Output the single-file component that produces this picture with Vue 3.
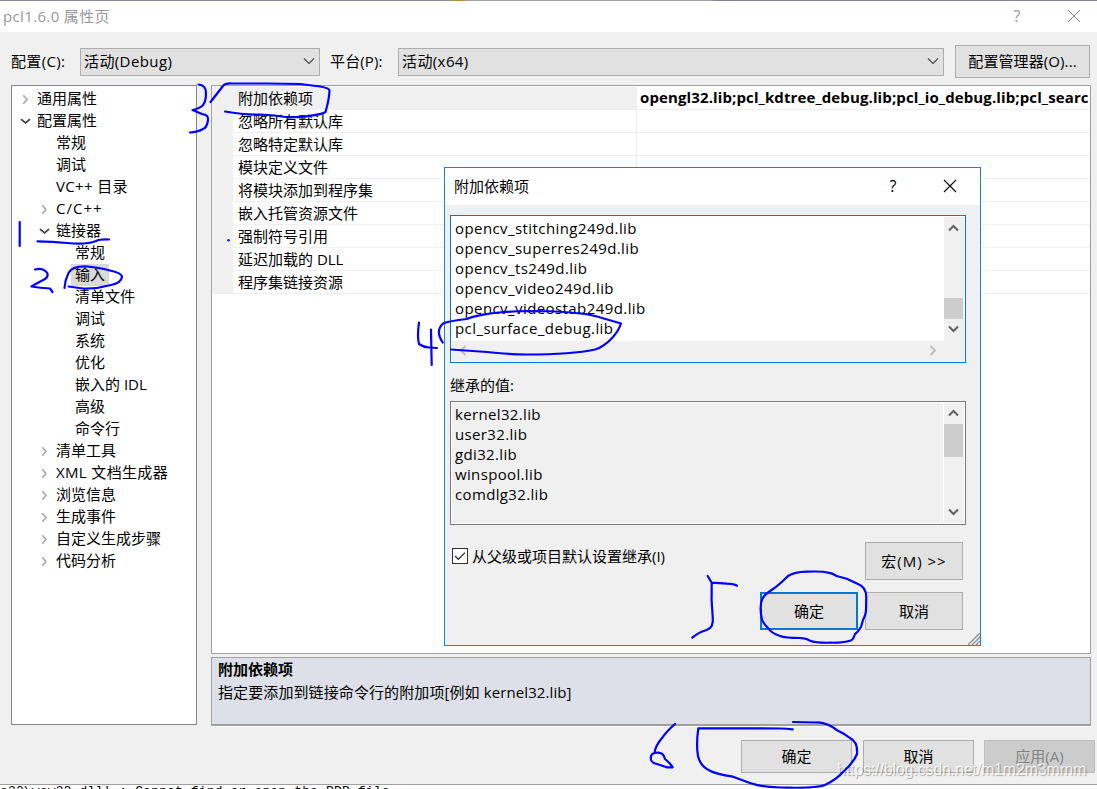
<script setup>
import { ref } from "vue";

const tree = ref([
  { text: "通用属性", level: 0, arrow: "closed" },
  { text: "配置属性", level: 0, arrow: "open" },
  { text: "常规", level: 1 },
  { text: "调试", level: 1 },
  { text: "VC++ 目录", level: 1, spacing: "wide" },
  { text: "C/C++", level: 1, arrow: "closed", spacing: "wider" },
  { text: "链接器", level: 1, arrow: "open" },
  { text: "常规", level: 2 },
  { text: "输入", level: 2, selected: true },
  { text: "清单文件", level: 2 },
  { text: "调试", level: 2 },
  { text: "系统", level: 2 },
  { text: "优化", level: 2 },
  { text: "嵌入的 IDL", level: 2 },
  { text: "高级", level: 2 },
  { text: "命令行", level: 2 },
  { text: "清单工具", level: 1, arrow: "closed" },
  { text: "XML 文档生成器", level: 1, arrow: "closed", spacing: "wide" },
  { text: "浏览信息", level: 1, arrow: "closed" },
  { text: "生成事件", level: 1, arrow: "closed" },
  { text: "自定义生成步骤", level: 1, arrow: "closed" },
  { text: "代码分析", level: 1, arrow: "closed" },
]);

const rows = ref([
  {
    name: "附加依赖项",
    value: "opengl32.lib;pcl_kdtree_debug.lib;pcl_io_debug.lib;pcl_searc",
  },
  { name: "忽略所有默认库" },
  { name: "忽略特定默认库" },
  { name: "模块定义文件" },
  { name: "将模块添加到程序集" },
  { name: "嵌入托管资源文件" },
  { name: "强制符号引用" },
  { name: "延迟加载的 DLL" },
  { name: "程序集链接资源" },
]);

const libs = ref([
  "opencv_stitching249d.lib",
  "opencv_superres249d.lib",
  "opencv_ts249d.lib",
  "opencv_video249d.lib",
  "opencv_videostab249d.lib",
  "pcl_surface_debug.lib",
]);
const inherited = ref([
  "kernel32.lib",
  "user32.lib",
  "gdi32.lib",
  "winspool.lib",
  "comdlg32.lib",
]);

// pen strokes, in page coordinates
const strokes = [
  "M19.7 222V246",
  "M37.5 241.3Q52 241.5 67 243Q86 245 96 241Q100 239 109 239.5",
  "M35 269.5C44 267 52 274 45 279C40 282 35 284 31.5 286.5Q40 288 50 288.5L52.5 292",
  "M64.5 288Q65 280 68.5 273Q72 266 87 266.5Q101 268 110 270.5Q122 273 122 277Q121 283 111 285Q97 289 83 288.5L68.5 286.5",
  "M198.5 84.5Q206 85 206 93C206 104 203 108 192.5 110L202 114Q209 115 208 120Q207 128 203 129Q198 132 190 132.5",
  "M210.5 102L223 86Q225 83 232 83.5L267 83.5L300 84L320 86.5Q330 88 329.5 91Q329 100 325.5 112Q319 116 289 117.5Q274 115 260 114.5Q244 115 225 111.5",
  "M419 322.5Q417 337 419 344Q423 347 429 347.5L437 348",
  "M431 329.5L431.7 365",
  "M442.7 342.5Q435 331 443 323.5Q449 321 466.7 319Q485 312 527 311Q577 311 597 316.5L621 323.5Q619 330 613 337Q604 347 595 349.5Q572 354.5 527 354.5Q502 354 487 352L451 349.5",
  "M707.7 576L711.7 582.7L727 583.7Q734 584 737 585.7M711.7 582.7Q711 600 712.7 616.7Q714 628 706.7 630Q699 632 692.3 637.7",
  "M762.7 598.3Q765 594 773 589Q779 585 788 576Q794 572 806.7 571.7Q823 571 828 572.7Q832 573 836.7 576L846.7 578.7L858 584Q866 587 866.3 596.7L866 610Q866 614 863 620L861 627Q858 632 855 634Q853 641 849 641Q842 643 830 642.7Q816 643 810 640.7Q806 638 800 638Q785 638 780 636Q771 633 768 628Q762 622 761.7 618Q759 605 762.7 598.3",
  "M675 724Q667 731 663 736.7Q655 746 654.5 753Q650 754 651 760Q652 763 657 764L666.7 767.3L672.7 767.3Q670 763 665 759Q664 755 661.7 753.5Q658 752 654.5 753",
  "M792.7 729.3Q786 728.5 780 728.5L698.3 728.3Q696 745 698 756Q700 766 710 770.7Q716 774 733 776.7L750 783Q764 788 790 787.7Q817 788 825 785Q837 779 843 772Q854 762 857 754Q858 742 850 738Q845 734 836.7 730Q826 722 816 722.5L793 722",
];
</script>

<template>
  <div class="screen">
    <div class="behind-top"></div>
    <header class="titlebar">
      <span class="wide">pcl1.6.0 属性页</span>
      <div class="title-icons">
        <span class="help">?</span>
        <svg width="14" height="14" viewBox="0 0 14 14">
          <path d="M1 1L13 13M13 1L1 13" stroke="#858585" fill="none" />
        </svg>
      </div>
    </header>

    <div class="config">
      <label class="config-label">配置(C):</label>
      <div class="combo combo-config">
        <span>活动(Debug)</span>
        <svg width="12" height="8" viewBox="0 0 12 8">
          <path d="M1 1.5L6 6.5L11 1.5" stroke="#444" stroke-width="1.1" fill="none" />
        </svg>
      </div>
      <label class="platform-label">平台(P):</label>
      <div class="combo combo-platform">
        <span>活动(x64)</span>
        <svg width="12" height="8" viewBox="0 0 12 8">
          <path d="M1 1.5L6 6.5L11 1.5" stroke="#444" stroke-width="1.1" fill="none" />
        </svg>
      </div>
      <button class="manager">配置管理器(O)...</button>
    </div>

    <main class="panes">
      <div class="tree">
        <div
          v-for="(node, i) in tree"
          :key="i"
          class="node"
          :class="'level' + node.level"
        >
          <span class="arrow">
            <svg v-if="node.arrow === 'closed'" width="7" height="11" viewBox="0 0 7 11">
              <path d="M1.3 1.3L5 5.5L1.3 9.7" stroke="#a6a6a6" stroke-width="1.6" fill="none" />
            </svg>
            <svg v-if="node.arrow === 'open'" width="11" height="7" viewBox="0 0 11 7">
              <path d="M1 1.2L5.5 5L10 1.2" stroke="#404040" stroke-width="1.7" fill="none" />
            </svg>
          </span>
          <span class="node-text" :class="[node.spacing, { selected: node.selected }]">{{ node.text }}</span>
        </div>
      </div>

      <div class="right">
        <div class="grid">
          <div v-for="row in rows" :key="row.name" class="row">
            <div class="gutter"></div>
            <div class="name">{{ row.name }}</div>
            <div class="value">{{ row.value }}</div>
          </div>
        </div>
        <div class="description">
          <strong>附加依赖项</strong>
          <p>指定要添加到链接命令行的附加项[例如 kernel32.lib]</p>
        </div>
      </div>
    </main>

    <footer class="actions">
      <button class="ok">确定</button>
      <button>取消</button>
      <button class="disabled">应用(A)</button>
    </footer>
    <div class="behind-bottom">s32\wow32.dll' : Cannot find or open the PDB file</div>

    <section class="dialog">
      <header class="dialog-title">
        <span>附加依赖项</span>
        <div class="title-icons">
          <span class="help">?</span>
          <svg width="14" height="14" viewBox="0 0 14 14">
            <path d="M1 1L13 13M13 1L1 13" stroke="#000" stroke-width="1.1" fill="none" />
          </svg>
        </div>
      </header>
      <div class="dialog-body">
        <div class="listbox active">
          <div class="list-main">
            <div class="lines">
              <div v-for="lib in libs" :key="lib">{{ lib }}</div>
            </div>
            <div class="scroll">
              <svg width="11" height="8" viewBox="0 0 11 8">
                <path d="M1 6.5L5.5 2L10 6.5" stroke="#606060" stroke-width="2" fill="none" />
              </svg>
              <div class="thumb low"></div>
              <svg width="11" height="8" viewBox="0 0 11 8">
                <path d="M1 1.5L5.5 6L10 1.5" stroke="#606060" stroke-width="2" fill="none" />
              </svg>
            </div>
          </div>
          <div class="hscroll">
            <svg width="8" height="11" viewBox="0 0 8 11">
              <path d="M6.5 1L2 5.5L6.5 10" stroke="#bfbfbf" stroke-width="2" fill="none" />
            </svg>
            <svg width="8" height="11" viewBox="0 0 8 11">
              <path d="M1.5 1L6 5.5L1.5 10" stroke="#bfbfbf" stroke-width="2" fill="none" />
            </svg>
          </div>
        </div>
        <div class="inherit-label">继承的值:</div>
        <div class="listbox readonly">
          <div class="list-main">
            <div class="lines">
              <div v-for="lib in inherited" :key="lib">{{ lib }}</div>
            </div>
            <div class="scroll">
              <svg width="11" height="8" viewBox="0 0 11 8">
                <path d="M1 6.5L5.5 2L10 6.5" stroke="#606060" stroke-width="2" fill="none" />
              </svg>
              <div class="thumb high"></div>
              <svg width="11" height="8" viewBox="0 0 11 8">
                <path d="M1 1.5L5.5 6L10 1.5" stroke="#606060" stroke-width="2" fill="none" />
              </svg>
            </div>
          </div>
        </div>
        <div class="macro-row">
          <div class="check">
            <svg width="16" height="16" viewBox="0 0 16 16">
              <rect x="0.5" y="0.5" width="15" height="15" fill="#fff" stroke="#333" />
              <path d="M3 8L6.3 11.3L13 4.6" stroke="#333" stroke-width="1.3" fill="none" />
            </svg>
            <span>从父级或项目默认设置继承(I)</span>
          </div>
          <button class="macro">宏(M) &gt;&gt;</button>
        </div>
        <div class="dialog-actions">
          <button class="primary">确定</button>
          <button>取消</button>
        </div>
      </div>
      <svg class="grip" width="12" height="12" viewBox="0 0 12 12">
        <path d="M0 12L12 0M4 12L12 4M8 12L12 8" stroke="#8c8c8c" stroke-width="1.3" />
      </svg>
    </section>

    <div class="watermark">https://blog.csdn.net/m1m2m3mmm</div>

    <svg class="ink" width="1097" height="789" viewBox="0 0 1097 789">
      <path v-for="d in strokes" :key="d" :d="d" />
      <circle cx="228.5" cy="240.3" r="1.2" />
    </svg>
  </div>
</template>

<style>
body {
  margin: 0;
}
</style>

<style scoped>
.screen {
  position: relative;
  width: 1097px;
  height: 789px;
  overflow: hidden;
  display: flex;
  flex-direction: column;
  background-color: #f0f0f0;
  color: #000;
  font-family: "Open Sans", "Noto Sans CJK SC", sans-serif;
  font-size: 15px;
  line-height: 20px;
  white-space: nowrap;
}
.screen * {
  box-sizing: border-box;
}
svg {
  display: block;
  flex: none;
}
button {
  padding: 0;
  border: 1px solid #adadad;
  border-radius: 0;
  background-color: #e1e1e1;
  color: #000;
  font: inherit;
}
.wide {
  letter-spacing: 0.35px;
}
.wider {
  letter-spacing: 1px;
}
.behind-top {
  height: 1px;
  flex: none;
  background: linear-gradient(90deg, #8b8b9a 0 450px, #b08c40 453px 465px, #a2a2a8 468px 710px, #85859a 715px);
}
.titlebar {
  height: 31px;
  flex: none;
  display: flex;
  align-items: center;
  justify-content: space-between;
  padding: 0 16px 2px 3px;
  background-color: #fff;
  color: #999;
}
.title-icons {
  display: flex;
  align-items: center;
  gap: 45px;
}
.help {
  width: 10px;
  text-align: center;
  font-size: 16px;
}
.config {
  height: 53px;
  flex: none;
  display: flex;
  align-items: center;
  padding: 6px 7px 0 11px;
}
.config-label {
  width: 69px;
  padding-bottom: 2px;
  letter-spacing: 0.35px;
}
.platform-label {
  width: 68px;
  margin-left: 10px;
  padding-bottom: 2px;
  letter-spacing: 0.15px;
}
.combo {
  height: 28px;
  display: flex;
  align-items: center;
  justify-content: space-between;
  padding: 0 4px 2px 3px;
  border: 1px solid #adadad;
  background-color: #e1e1e1;
  letter-spacing: 0.4px;
}
.combo-config {
  width: 240px;
}
.combo-platform {
  width: 546px;
}
.manager {
  width: 135px;
  height: 33px;
  margin-left: 11px;
  padding-bottom: 2px;
  letter-spacing: 0.1px;
}
.panes {
  height: 641px;
  flex: none;
  display: flex;
  gap: 14px;
  padding: 0 6px 0 11px;
}
.tree {
  width: 186px;
  height: 640px;
  padding-top: 2px;
  border: 1px solid #828790;
  background-color: #fff;
}
.node {
  height: 22px;
  display: flex;
  align-items: center;
}
.level0 {
  padding-left: 5px;
}
.level1 {
  padding-left: 24px;
}
.level2 {
  padding-left: 43px;
}
.arrow {
  width: 16px;
  display: flex;
  justify-content: center;
}
.node-text {
  height: 22px;
  line-height: 21px;
  padding: 0 4px;
}
.selected {
  background-color: #d9d9d9;
}
.right {
  width: 880px;
  display: flex;
  flex-direction: column;
  gap: 3px;
}
.grid {
  height: 569px;
  padding-top: 1px;
  border: 1px solid #a0a0a0;
  background-color: #fff;
  overflow: hidden;
}
.row {
  height: 23px;
  display: flex;
  line-height: 22px;
}
.gutter {
  width: 21px;
  background-color: #f0f0f0;
}
.name {
  width: 404px;
  padding-left: 5px;
  border-right: 1px solid #f0f0f0;
  border-bottom: 1px solid #f0f0f0;
}
.value {
  flex: 1;
  min-width: 0;
  height: 23px;
  padding-left: 3px;
  border-bottom: 1px solid #f0f0f0;
  font-weight: bold;
  line-height: 20px;
  letter-spacing: 0.12px;
}
.row:first-child .name {
  background-color: #f0f0f0;
}
.description {
  height: 69px;
  padding: 1px 6px;
  border: 1px solid #a0a0a0;
  border-bottom-width: 2px;
  box-shadow: 0 1px #fff;
  background-color: #dde0e9;
  line-height: 20px;
}
.description p {
  margin: 3px 0 0;
  letter-spacing: 0.1px;
}
.actions {
  height: 58px;
  flex: none;
  display: flex;
  justify-content: flex-end;
  align-items: flex-start;
  gap: 10px;
  padding: 14px 2px 0 0;
}
.actions button {
  width: 111px;
  height: 33px;
  padding-bottom: 2px;
}
.actions .ok {
  margin-right: 1px;
}
.actions .disabled {
  border-color: #bfbfbf;
  background-color: #ccc;
  color: #838383;
}
.behind-bottom {
  height: 5px;
  flex: none;
  overflow: hidden;
  border-top: 1px solid #a0a0a0;
  background-color: #fff;
  font-family: "Liberation Mono", monospace;
  font-size: 13px;
  line-height: 13px;
  letter-spacing: 0.15px;
}
.dialog {
  position: absolute;
  left: 444px;
  top: 167px;
  width: 537px;
  height: 479px;
  border: 1px solid #1883d7;
  background-color: #f0f0f0;
}
.dialog-title {
  height: 37px;
  display: flex;
  align-items: center;
  justify-content: space-between;
  padding: 0 23px 2px 9px;
  background-color: #fff;
}
.dialog-body {
  padding: 10px 14px 0 5px;
}
.listbox {
  padding: 1px;
  border: 1px solid #7a7a7a;
}
.active {
  height: 148px;
  border-color: #0078d7;
  background-color: #fff;
}
.readonly {
  height: 124px;
  background-color: #fff;
}
.list-main {
  display: flex;
  height: 124px;
}
.readonly .list-main {
  height: 120px;
  background-color: #f0f0f0;
}
.lines {
  flex: 1;
  padding: 1px 0 0 3px;
  letter-spacing: 0.42px;
}
.readonly .lines {
  letter-spacing: 0.35px;
}
.scroll {
  width: 20px;
  display: flex;
  flex-direction: column;
  align-items: center;
  justify-content: space-between;
  padding: 7px 1px 8px 0;
  background-color: #f0f0f0;
}
.readonly .scroll {
  width: 21px;
  padding: 6px 1px 7px 0;
  border-left: 1px solid #fff;
}
.thumb {
  width: 19px;
  background-color: #cdcdcd;
}
.low {
  height: 21px;
  margin: 59px 0 0;
}
.high {
  height: 33px;
  margin: 0 0 44px;
}
.hscroll {
  height: 20px;
  display: flex;
  align-items: center;
  justify-content: space-between;
  padding: 0 27px 1px 7px;
  background-color: #f0f0f0;
}
.inherit-label {
  height: 38px;
  line-height: 44px;
}
.macro-row {
  height: 38px;
  margin-top: 17px;
  padding-right: 3px;
  display: flex;
  justify-content: space-between;
}
.check {
  display: flex;
  align-items: center;
  gap: 4px;
  height: 28px;
  padding-left: 2px;
}
.macro,
.dialog-actions button {
  width: 98px;
  height: 38px;
}
.macro {
  letter-spacing: 1px;
}
.dialog-actions {
  display: flex;
  justify-content: flex-end;
  gap: 7px;
  margin-top: 12px;
  padding-right: 3px;
}
.dialog-actions .primary {
  border: 2px solid #0078d7;
}
.grip {
  position: absolute;
  right: 0;
  bottom: 0;
}
.watermark {
  position: absolute;
  left: 837px;
  top: 760px;
  color: rgba(255, 255, 255, 0.8);
  font-family: "Liberation Sans", Arial, sans-serif;
  font-size: 16px;
  letter-spacing: -0.17px;
  text-shadow: 1px 1px 1px rgba(0, 0, 0, 0.3);
}
.ink {
  position: absolute;
  left: 0;
  top: 0;
}
.ink path {
  fill: none;
  stroke: #0000fe;
  stroke-width: 2.2;
  stroke-linecap: round;
  stroke-linejoin: round;
}
.ink circle {
  fill: #0000fe;
}
</style>
